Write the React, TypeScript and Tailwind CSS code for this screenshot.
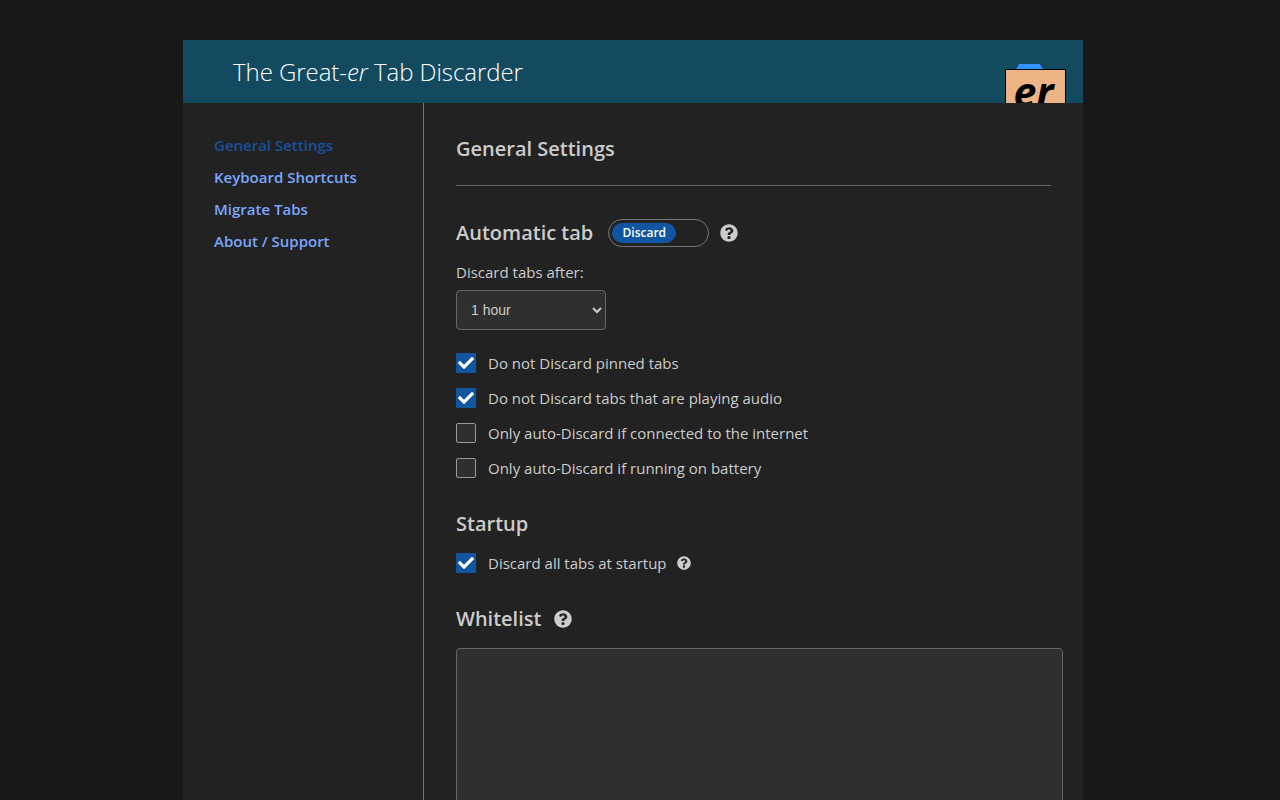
import { FaCheck, FaQuestionCircle } from "react-icons/fa";

const navItems = [
  { label: "General Settings", active: true },
  { label: "Keyboard Shortcuts", active: false },
  { label: "Migrate Tabs", active: false },
  { label: "About / Support", active: false },
];

const tabOptions = [
  { label: "Do not Discard pinned tabs", checked: true },
  { label: "Do not Discard tabs that are playing audio", checked: true },
  { label: "Only auto-Discard if connected to the internet", checked: false },
  { label: "Only auto-Discard if running on battery", checked: false },
];

function Checkbox({ checked }: { checked: boolean }) {
  return checked ? (
    <span className="flex h-5 w-5 shrink-0 items-center justify-center rounded-[1px] bg-[#0f559f] text-white">
      <FaCheck className="h-4 w-4" />
    </span>
  ) : (
    <span className="h-5 w-5 shrink-0 rounded-[2px] border border-[#999999] bg-[#2f2f2f]" />
  );
}

function Logo() {
  return (
    <div className="flex h-[39px] w-[61px] flex-col">
      <svg width="27" height="5" viewBox="0 0 27 5" className="ml-[11px] block shrink-0">
        <path d="M3 0 H24 L26 4 H27 V5 H0 V4 H1 Z" fill="#3295ff" />
      </svg>
      <div className="h-[34px] w-[61px] overflow-hidden border-x border-t border-black bg-[#ecb385] pr-1 text-center font-['Open_Sans',sans-serif] text-[41px] font-bold italic leading-[42px] text-black">
        er
      </div>
    </div>
  );
}

export default function App() {
  return (
    <div className="h-screen overflow-hidden bg-[#181818] pt-10 font-['Open_Sans',sans-serif] text-[15px] text-[#cccccc]">
      <div className="ml-[183px] flex h-[760px] w-[900px] flex-col bg-[#222222]">
        {/* Header */}
        <header className="flex h-[63px] shrink-0 items-end justify-between bg-[#134a60] pl-[50px] pr-[17px]">
          <h1 className="self-center text-[24px] font-light leading-none tracking-[-0.06px] text-white">
            The Great-<em>er</em> Tab Discarder
          </h1>
          <Logo />
        </header>

        <div className="flex min-h-0 flex-1">
          {/* Sidebar */}
          <nav className="flex w-[241px] shrink-0 flex-col gap-3 border-r border-[#777777] pl-[31px] pt-8">
            {navItems.map((item) => (
              <a
                key={item.label}
                href="#"
                className={`text-[15px] font-semibold leading-5 ${
                  item.active ? "text-[#1a4f9c]" : "text-[#7aa7ff]"
                }`}
              >
                {item.label}
              </a>
            ))}
          </nav>

          {/* Main */}
          <main className="min-w-0 flex-1 pl-8 pt-8">
            <h2 className="text-[20px] font-semibold leading-[28px]">General Settings</h2>
            <hr className="mt-[22px] w-[595px] border-[#666666]" />

            <div className="mt-[33px] flex h-[28px] items-center">
              <h3 className="text-[20px] font-semibold leading-[28px]">Automatic tab</h3>
              <div className="ml-[15px] flex h-7 w-[101px] items-center rounded-full border border-[#777777] pl-[3px]">
                <span className="flex h-5 w-[64px] items-center justify-center rounded-full bg-[#0f559f] text-[12px] font-semibold text-white">
                  Discard
                </span>
              </div>
              <FaQuestionCircle className="ml-[11px] h-[18px] w-[18px]" />
            </div>

            <p className="mt-[15px] leading-5">Discard tabs after:</p>
            <select className="mt-2 block h-10 w-[150px] rounded-[4px] border border-[#666666] bg-[#2f2f2f] pl-[10px] font-['Liberation_Sans',sans-serif] text-[14px] text-[#cccccc] [color-scheme:dark]">
              <option>1 hour</option>
            </select>

            <div className="mt-[23px] flex flex-col gap-[15px]">
              {tabOptions.map((option) => (
                <label key={option.label} className="flex h-5 items-center gap-3">
                  <Checkbox checked={option.checked} />
                  {option.label}
                </label>
              ))}
            </div>

            <h3 className="mt-8 text-[20px] font-semibold leading-[28px]">Startup</h3>
            <label className="mt-[15px] flex h-5 items-center">
              <Checkbox checked />
              <span className="ml-3">Discard all tabs at startup</span>
              <FaQuestionCircle className="ml-[10px] h-[14px] w-[14px]" />
            </label>

            <div className="mt-8 flex h-[28px] items-center gap-[13px]">
              <h3 className="text-[20px] font-semibold leading-[28px]">Whitelist</h3>
              <FaQuestionCircle className="h-[18px] w-[18px]" />
            </div>
            <textarea className="mt-[15px] block h-[300px] w-[607px] resize-none rounded-[4px] border border-[#666666] bg-[#2f2f2f]" />
          </main>
        </div>
      </div>
    </div>
  );
}
